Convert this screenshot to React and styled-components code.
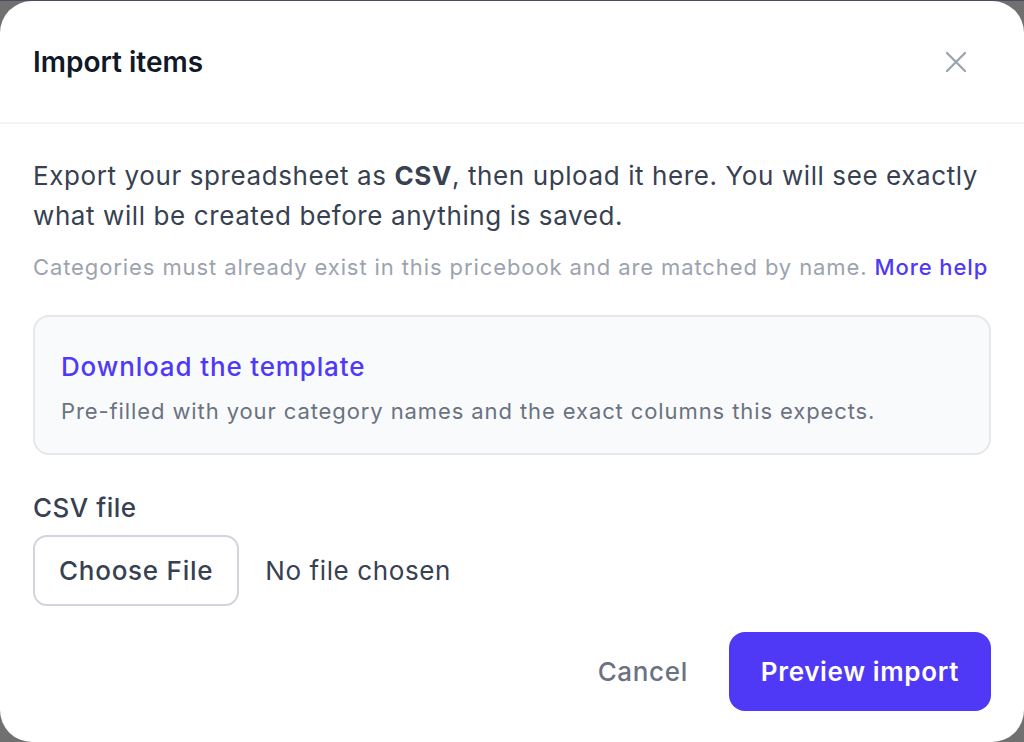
import React from 'react';
import styled, { createGlobalStyle } from 'styled-components';

const GlobalStyle = createGlobalStyle`
  html, body {
    margin: 0;
    padding: 0;
    height: 100%;
    background: #707070;
  }
  body {
    border-top: 1px solid #4b4b5c;
    box-sizing: border-box;
    overflow: hidden;
    font-family: 'Inter', 'Liberation Sans', sans-serif;
    -webkit-font-smoothing: antialiased;
  }
  * {
    box-sizing: border-box;
  }
`;

const App = () => {
  return (
    <>
      <GlobalStyle />
      <Dialog>
        <Header>
          <Title>Import items</Title>
          <CloseButton aria-label="Close">
            <svg width="20" height="20" viewBox="0 0 20 20" fill="none">
              <path d="M1 1L19 19M19 1L1 19" stroke="currentColor" strokeWidth="2.3" strokeLinecap="round" />
            </svg>
          </CloseButton>
        </Header>

        <Body>
          <Lead>
            Export your spreadsheet as <Strong>CSV</Strong>, then upload it here. You will see exactly
            what will be created before anything is saved.
          </Lead>
          <Hint>
            Categories must already exist in this pricebook and are matched by name.{' '}
            <Link href="#">More help</Link>
          </Hint>

          <TemplateCard>
            <CardTitle href="#">Download the template</CardTitle>
            <CardText>Pre-filled with your category names and the exact columns this expects.</CardText>
          </TemplateCard>

          <Label>CSV file</Label>
          <FileRow>
            <ChooseButton type="button">Choose File</ChooseButton>
            <FileName>No file chosen</FileName>
          </FileRow>
        </Body>

        <Footer>
          <Button type="button">Cancel</Button>
          <Button type="button" $primary>Preview import</Button>
        </Footer>
      </Dialog>
    </>
  );
};

export default App;

const Dialog = styled.div`
  width: 1024px;
  height: 741px;
  background: #ffffff;
  border-radius: 32px;
  display: flex;
  flex-direction: column;
  overflow: hidden;
`;

const Header = styled.div`
  height: 123px;
  padding: 0 58px 0 33px;
  display: flex;
  align-items: center;
  justify-content: space-between;
  border-bottom: 2px solid #f3f4f6;
`;

const Title = styled.h2`
  margin: 0;
  font-size: 28px;
  line-height: 36px;
  font-weight: 600;
  color: #111827;
`;

const CloseButton = styled.button`
  border: 0;
  background: none;
  padding: 0;
  color: #9ca3af;
  display: flex;
  cursor: pointer;
`;

const Body = styled.div`
  padding: 32px 33px 0;
  display: flex;
  flex-direction: column;
`;

const Lead = styled.p`
  margin: 0;
  font-size: 26px;
  line-height: 40px;
  letter-spacing: 0.6px;
  color: #374151;
`;

const Strong = styled.strong`
  font-weight: 700;
`;

const Hint = styled.p`
  margin: 15px 0 0;
  font-size: 22px;
  line-height: 32px;
  letter-spacing: 0.9px;
  color: #9ca3af;
`;

const Link = styled.a`
  color: #4f39f6;
  font-weight: 500;
  text-decoration: none;
`;

const TemplateCard = styled.div`
  margin-top: 32px;
  padding: 32px 26px 26px;
  border: 2px solid #e5e7eb;
  border-radius: 16px;
  background: #f9fafb;
  display: flex;
  flex-direction: column;
  gap: 10px;
`;

const CardTitle = styled.a`
  font-size: 26px;
  line-height: 36px;
  font-weight: 500;
  letter-spacing: 0.85px;
  color: #4f39f6;
  text-decoration: none;
`;

const CardText = styled.p`
  margin: 0;
  font-size: 22px;
  line-height: 32px;
  letter-spacing: 0.9px;
  color: #6b7280;
`;

const Label = styled.label`
  margin-top: 35px;
  font-size: 26px;
  line-height: 36px;
  font-weight: 500;
  letter-spacing: 0.5px;
  color: #374151;
`;

const FileRow = styled.div`
  margin-top: 9px;
  display: flex;
  align-items: center;
  gap: 26px;
`;

const ChooseButton = styled.button`
  height: 71px;
  padding: 0 24px;
  border: 2px solid #d1d5db;
  border-radius: 14px;
  background: #ffffff;
  font-family: inherit;
  font-size: 26px;
  font-weight: 500;
  letter-spacing: 0.75px;
  color: #374151;
`;

const FileName = styled.span`
  font-size: 26px;
  letter-spacing: 0.6px;
  color: #374151;
`;

const Footer = styled.div`
  margin-top: auto;
  padding: 0 33px 31px;
  display: flex;
  justify-content: flex-end;
  align-items: center;
  gap: 20px;
`;

const Button = styled.button`
  height: 79px;
  padding: 0 ${(p) => (p.$primary ? '32px' : '21px')};
  border: 0;
  border-radius: 16px;
  background: ${(p) => (p.$primary ? '#4f39f6' : 'transparent')};
  color: ${(p) => (p.$primary ? '#ffffff' : '#6b7280')};
  font-family: inherit;
  font-size: 26px;
  font-weight: ${(p) => (p.$primary ? 600 : 500)};
  letter-spacing: 0.65px;
  cursor: pointer;
`;
